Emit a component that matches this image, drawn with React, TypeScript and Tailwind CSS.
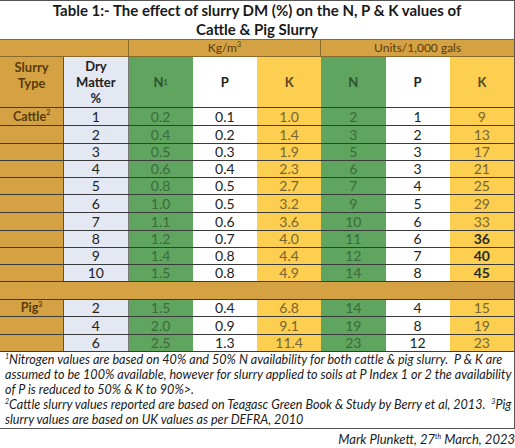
import React from "react";

const gold = "bg-[#d4a242]";
const cattle = [
  ["1", "0.2", "0.1", "1.0", "2", "1", "9"],
  ["2", "0.4", "0.2", "1.4", "3", "2", "13"],
  ["3", "0.5", "0.3", "1.9", "5", "3", "17"],
  ["4", "0.6", "0.4", "2.3", "6", "3", "21"],
  ["5", "0.8", "0.5", "2.7", "7", "4", "25"],
  ["6", "1.0", "0.5", "3.2", "9", "5", "29"],
  ["7", "1.1", "0.6", "3.6", "10", "6", "33"],
  ["8", "1.2", "0.7", "4.0", "11", "6", "36"],
  ["9", "1.4", "0.8", "4.4", "12", "7", "40"],
  ["10", "1.5", "0.8", "4.9", "14", "8", "45"],
];
const pig = [
  ["2", "1.5", "0.4", "6.8", "14", "4", "15"],
  ["4", "2.0", "0.9", "9.1", "19", "8", "19"],
  ["6", "2.5", "1.3", "11.4", "23", "12", "23"],
];
const bold = ["36", "40", "45"];

function Sup({ children }: { children: React.ReactNode }) {
  return <span className="inline-block align-top text-[7px] leading-[8px]">{children}</span>;
}

function Row({ label, sup, r, tall }: { label?: string; sup?: string; r: string[]; tall?: boolean }) {
  return (
    <div className={`grid grid-cols-8 ${tall ? "h-[18px] leading-[17px]" : "h-[17px] leading-[16px]"} border-b border-[#3a3a3a] text-[14px]`}>
      <div className={`${gold} border-r border-[#6b5020] text-center font-bold text-[12.5px] text-[#5a3b0c]`}>
        {label}
        {sup && <Sup>{sup}</Sup>}
      </div>
      <div className="bg-[#e4e8f2] text-center text-[#222] border-r border-[#777]">{r[0]}</div>
      <div className="bg-[#5fa55f] text-center text-[#3c6a3c]">{r[1]}</div>
      <div className="bg-white text-center text-[#222]">{r[2]}</div>
      <div className="bg-[#fdcf50] text-center text-[#7a6432]">{r[3]}</div>
      <div className="bg-[#5fa55f] text-center text-[#3c6a3c]">{r[4]}</div>
      <div className="bg-white text-center text-[#222]">{r[5]}</div>
      <div className={`bg-[#fdcf50] text-center ${bold.includes(r[6]) ? "text-[#2a2a2a] font-bold" : "text-[#7a6432]"}`}>{r[6]}</div>
    </div>
  );
}

export default function App() {
  return (
    <div className="w-[515px] h-[448px] bg-white overflow-hidden" style={{ fontFamily: "Lato, 'Open Sans', sans-serif" }}>
      <div className="border-t border-[#555] border-r">
        <div className="text-center font-bold text-[15px] leading-[19px] text-[#1a1a1a]">
          <div>Table 1:- The effect of slurry DM (%) on the N, P &amp; K values of</div>
          <div>Cattle &amp; Pig Slurry</div>
        </div>
        <div className={`grid grid-cols-8 h-[18px] ${gold} border-t border-b border-[#8a6a2a] text-[12px] leading-[15px] text-[#5a3b0c]`}>
          <div className="col-span-2 border-r border-[#8a6a2a]"></div>
          <div className="col-span-3 text-center border-r border-[#8a6a2a]">Kg/m<Sup>3</Sup></div>
          <div className="col-span-3 text-center">Units/1,000 gals</div>
        </div>
        <div className="grid grid-cols-8 h-[51px] border-b border-[#3a3a3a] font-bold text-[13px] leading-[16px]">
          <div className={`${gold} border-r border-[#6b5020] text-center text-[#5a3b0c] pt-[2px]`}>Slurry<br />Type</div>
          <div className="bg-[#e4e8f2] border-r border-[#777] text-center text-[#222] pt-[1px]">Dry<br />Matter<br />%</div>
          <div className="bg-[#5fa55f] text-[#2f552f] flex items-center justify-center">N<Sup>1</Sup></div>
          <div className="bg-white text-[#222] flex items-center justify-center">P</div>
          <div className="bg-[#fdcf50] text-[#5a4520] flex items-center justify-center">K</div>
          <div className="bg-[#5fa55f] text-[#2f552f] flex items-center justify-center">N</div>
          <div className="bg-white text-[#222] flex items-center justify-center">P</div>
          <div className="bg-[#fdcf50] text-[#5a4520] flex items-center justify-center">K</div>
        </div>
        {cattle.map((r, i) => (
          <Row key={i} r={r} tall={i % 5 < 2} label={i === 0 ? "Cattle" : undefined} sup={i === 0 ? "2" : undefined} />
        ))}
        <div className={`h-[18px] ${gold} border-b border-[#3a3a3a]`}></div>
        {pig.map((r, i) => (
          <Row key={i} r={r} tall={i === 1} label={i === 0 ? "Pig" : undefined} sup={i === 0 ? "3" : undefined} />
        ))}
        <div className="border-b border-[#555] italic text-[12.6px] leading-[15px] text-[#1a1a1a] pl-[5px] pr-[2px] pb-[1px]">
          <div>
            <Sup>1</Sup>Nitrogen values are based on 40% and 50% N availability for both cattle &amp; pig slurry.&nbsp; P &amp; K are assumed to be 100% available, however for slurry applied to soils at P Index 1 or 2 the availability of P is reduced to 50% &amp; K to 90%&gt;.
          </div>
          <div>
            <Sup>2</Sup>Cattle slurry values reported are based on Teagasc Green Book &amp; Study by Berry et al, 2013.&nbsp; <Sup>3</Sup>Pig slurry values are based on UK values as per DEFRA, 2010
          </div>
        </div>
      </div>
      <div className="text-right italic text-[13px] leading-[15px] text-[#1a1a1a] pt-[3px]">
        Mark Plunkett, 27<Sup>th</Sup> March, 2023
      </div>
    </div>
  );
}
